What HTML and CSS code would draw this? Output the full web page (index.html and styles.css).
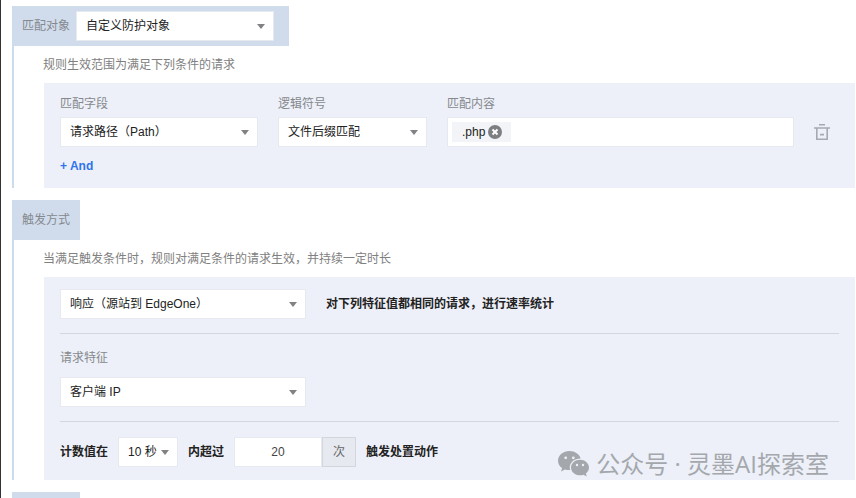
FILE: index.html
```html
<!DOCTYPE html>
<html lang="zh-CN">
<head>
    <meta charset="UTF-8">
    <meta name="viewport" content="width=device-width, initial-scale=1.0">
    <title>速率限制规则</title>
    <link rel="stylesheet" href="styles.css">
</head>
<body>
    <section class="group">
        <div class="tab tab-wide">
            <label for="target">匹配对象</label>
            <div class="select select-md">
                <select id="target"><option>自定义防护对象</option></select>
            </div>
        </div>
        <p class="hint">规则生效范围为满足下列条件的请求</p>
        <div class="panel">
            <div class="condition">
                <div class="field">
                    <label for="field">匹配字段</label>
                    <div class="select select-md">
                        <select id="field"><option>请求路径（Path）</option></select>
                    </div>
                </div>
                <div class="field">
                    <label for="logic">逻辑符号</label>
                    <div class="select select-sm">
                        <select id="logic"><option>文件后缀匹配</option></select>
                    </div>
                </div>
                <div class="field field-grow">
                    <label for="content">匹配内容</label>
                    <div class="tag-input">
                        <span class="tag">.php
                            <button class="tag-close" type="button" aria-label="移除">
                                <svg width="14" height="14" viewBox="0 0 14 14">
                                    <circle cx="7" cy="7" r="7" fill="#7d7f83"/>
                                    <path d="M4.5 4.5l5 5M9.5 4.5l-5 5" stroke="#fff" stroke-width="2"/>
                                </svg>
                            </button>
                        </span>
                        <input id="content" type="text">
                    </div>
                </div>
                <button class="delete" type="button" aria-label="删除">
                    <svg width="16" height="16" viewBox="0 0 16 16" fill="none" stroke="#a6a9af" stroke-width="1.6">
                        <path d="M5 0.8h6M0 4h16M2.8 4v11.2h10.4V4M6 10.6h4"/>
                    </svg>
                </button>
            </div>
            <button class="add" type="button">+ And</button>
        </div>
    </section>

    <section class="group">
        <div class="tab">触发方式</div>
        <p class="hint">当满足触发条件时，规则对满足条件的请求生效，并持续一定时长</p>
        <div class="panel">
            <div class="row row-wide">
                <div class="select select-lg">
                    <select aria-label="统计阶段"><option>响应（源站到 EdgeOne）</option></select>
                </div>
                <strong>对下列特征值都相同的请求，进行速率统计</strong>
            </div>
            <hr>
            <div class="field field-spaced">
                <label for="feature">请求特征</label>
                <div class="select select-lg">
                    <select id="feature"><option>客户端 IP</option></select>
                </div>
            </div>
            <hr>
            <div class="row">
                <strong>计数值在</strong>
                <div class="select select-xs">
                    <select aria-label="计数周期"><option>10 秒</option></select>
                </div>
                <strong>内超过</strong>
                <div class="counter">
                    <input type="text" value="20" aria-label="次数">
                    <span class="unit">次</span>
                </div>
                <strong>触发处置动作</strong>
            </div>
        </div>
    </section>

    <section class="group group-last">
        <div class="tab tab-empty"></div>
    </section>

    <div class="watermark">
        <svg width="32" height="26" viewBox="0 0 32 26">
            <path fill="#a4a8ad" d="M11.5 0C5.1 0 0 4.3 0 9.7c0 3 1.6 5.6 4.1 7.4L3 20.5l4-2.1c1.4.4 2.9.7 4.5.7h.7c-.3-.9-.4-1.7-.4-2.6 0-5 4.7-8.9 10.4-8.9h.5C21.5 3.2 16.9 0 11.5 0z"/>
            <path fill="#a4a8ad" d="M31 16.5c0-4.400-4.100-7.800-9-7.800s-9 3.400-9 7.800 4.100 7.800 9 7.800c1.200 0 2.400-.2 3.500-.6l3.300 1.800-.9-3c1.900-1.500 3.100-3.600 3.100-6z"/>
            <g fill="#edf0f8">
                <circle cx="7.7" cy="6.8" r="1.4"/>
                <circle cx="15.3" cy="6.8" r="1.4"/>
                <circle cx="19" cy="14" r="1.2"/>
                <circle cx="25" cy="14" r="1.2"/>
            </g>
        </svg>
        <span>公众号 · 灵墨AI探索室</span>
    </div>
</body>
</html>
```

FILE: styles.css
```css
* {
    box-sizing: border-box;
}

body {
    position: relative;
    display: flex;
    flex-direction: column;
    min-height: 100vh;
    margin: 0;
    padding: 6px 1px 0 11px;
    border-left: 1px solid #333;
    background: #fff;
    color: #222;
    font-family: "Liberation Sans", "Noto Sans CJK SC", sans-serif;
    font-size: 12px;
    line-height: 18px;
}

button,
input,
select {
    margin: 0;
    padding: 0;
    border: none;
    background: none;
    color: inherit;
    font: inherit;
}

button {
    cursor: pointer;
}

.group {
    margin-bottom: 12px;
    border-left: 2px solid #cbdcec;
}

.group-last {
    display: flex;
    flex: 1;
    margin-bottom: 0;
}

.tab {
    display: flex;
    align-items: center;
    gap: 6px;
    width: fit-content;
    height: 40px;
    padding: 0 10px 0 8px;
    background: #d0dcec;
    color: #85898f;
}

.tab-wide {
    padding-right: 15px;
}

.tab-empty {
    width: 66px;
    height: auto;
}

.hint {
    margin: 10px 0 9px 29px;
    color: #808080;
}

.panel {
    margin-left: 30px;
    padding: 12px 16px 13px;
    background: #edf0f8;
}

.select {
    position: relative;
    height: 30px;
}

.select::after {
    content: "";
    position: absolute;
    top: 13px;
    right: 9px;
    border: 4px solid transparent;
    border-top: 5px solid #808285;
    border-bottom: none;
    pointer-events: none;
}

.select select {
    width: 100%;
    height: 100%;
    padding-left: 9px;
    border: 1px solid #e6e9ef;
    background: #fff;
    color: #222;
    appearance: none;
}

.select-xs {
    width: 60px;
}

.select-sm {
    width: 149px;
}

.select-md {
    width: 198px;
}

.select-lg {
    width: 246px;
}

.condition {
    display: flex;
    align-items: flex-end;
    gap: 20px;
}

.field {
    display: flex;
    flex-direction: column;
    gap: 4px;
    color: #85888d;
}

.field-spaced {
    gap: 10px;
}

.field-grow {
    flex: 1;
}

.tag-input {
    display: flex;
    align-items: center;
    height: 30px;
    padding: 0 4px;
    border: 1px solid #e6e9ef;
    background: #fff;
}

.tag-input input {
    flex: 1;
    min-width: 0;
}

.tag {
    display: flex;
    align-items: center;
    gap: 3px;
    height: 20px;
    padding: 0 9px 0 10px;
    background: #f3f4f7;
    color: #222;
}

.tag-close,
.delete {
    display: flex;
}

.delete {
    margin: 0 9px 7px 0;
}

.add {
    display: block;
    margin-top: 10px;
    color: #2f74ee;
    font-weight: bold;
}

.row {
    display: flex;
    align-items: center;
    gap: 10px;
}

.row-wide {
    gap: 20px;
}

hr {
    height: 1px;
    margin: 14px 0 15px;
    border: none;
    background: #d3d6de;
}

.counter {
    display: flex;
    height: 30px;
}

.counter input {
    width: 88px;
    border: 1px solid #e6e9ef;
    background: #fff;
    color: #444;
    text-align: center;
}

.unit {
    width: 34px;
    border: 1px solid #d3d6dc;
    background: #e6e9f0;
    color: #666;
    line-height: 28px;
    text-align: center;
}

.watermark {
    position: absolute;
    right: 27px;
    bottom: 16px;
    display: flex;
    align-items: center;
    gap: 6px;
    color: #a4a8ad;
    font-family: "Open Sans", "Noto Sans CJK SC", sans-serif;
    font-size: 24px;
    line-height: 36px;
}
```
